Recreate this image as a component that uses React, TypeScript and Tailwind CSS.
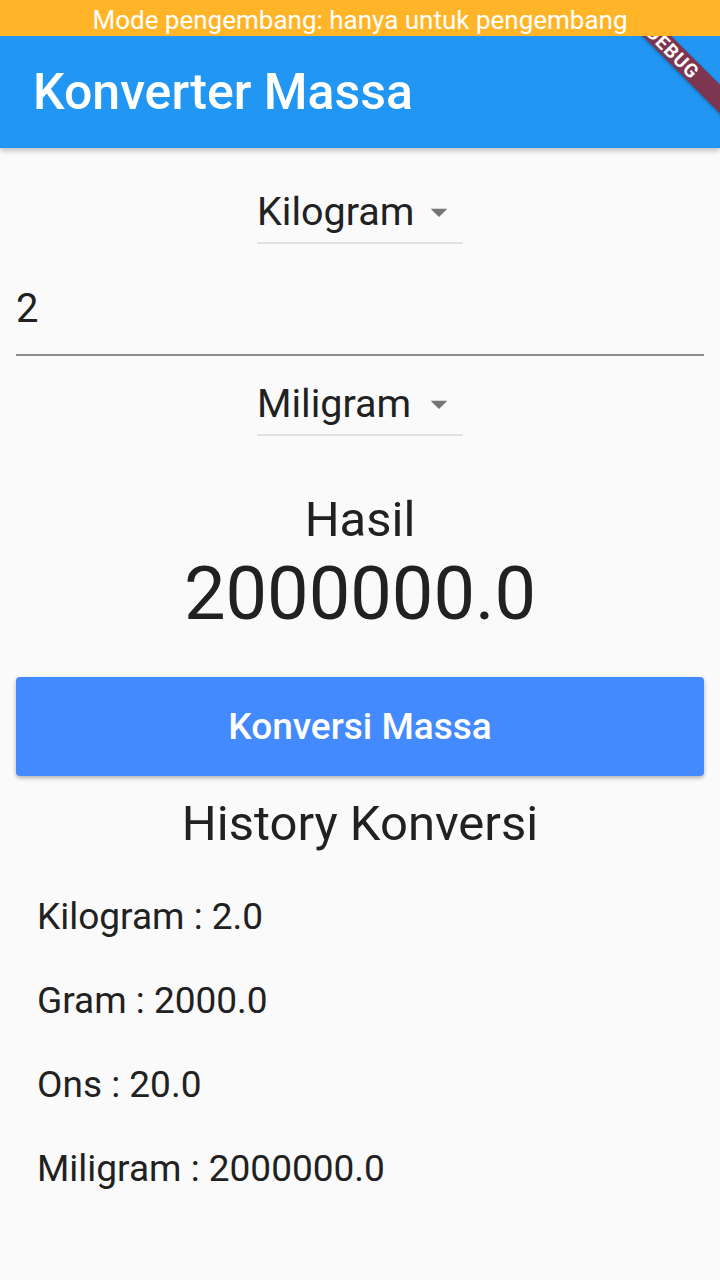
import React from 'react';

const ArrowDrop: React.FC = () => (
  <svg viewBox="0 0 24 24" className="w-[40px] h-[40px] fill-[#757575]">
    <path d="M7 10l5 5 5-5z" />
  </svg>
);

const Dropdown: React.FC<{ label: string; className?: string }> = ({ label, className }) => (
  <div className={`mx-auto w-[206px] flex items-center justify-between pb-[6px] border-b-2 border-[#e0e0e0] ${className ?? ''}`}>
    <span className="text-[39.5px] leading-[48px] text-[#212121]">{label}</span>
    <span className="mr-[4px]">
      <ArrowDrop />
    </span>
  </div>
);

const history = ['Kilogram : 2.0', 'Gram : 2000.0', 'Ons : 20.0', 'Miligram : 2000000.0'];

const App: React.FC = () => {
  return (
    <div className="relative w-full h-[1280px] overflow-hidden bg-[#fafafa] font-[Roboto,sans-serif]">
      {/* developer mode strip */}
      <div className="relative z-20 h-[36px] bg-[#ffb527] text-center text-white text-[26px] leading-[36px] pt-[2px]">
        Mode pengembang: hanya untuk pengembang
      </div>

      {/* debug ribbon */}
      <div className="absolute z-10 left-[573px] top-[42px] w-[200px] h-[20px] rotate-45 bg-[#7d3550] shadow-[0_1px_3px_rgba(0,0,0,0.35)] flex items-center justify-center">
        <span className="text-white text-[19px] font-bold leading-none tracking-[1px]">DEBUG</span>
      </div>

      <header className="relative z-[5] h-[112px] bg-[#2196f3] px-[33px] flex items-center shadow-[0_3px_5px_rgba(0,0,0,0.22)]">
        <h1 className="text-white text-[50px] font-medium leading-none">Konverter Massa</h1>
      </header>

      <main className="flex flex-col">
        <Dropdown label="Kilogram" className="mt-[40px]" />

        <div className="mx-[16px] mt-[41px] pb-[21px] border-b-2 border-[#8c8c8c] text-[40px] leading-[48px] text-[#212121]">
          2
        </div>

        <Dropdown label="Miligram" className="mt-[24px]" />

        <p className="mt-[56px] text-center text-[49px] leading-[56px] text-[#212121]">Hasil</p>
        <p className="mt-[4px] text-center text-[74px] leading-[84px] text-[#212121]">2000000.0</p>

        <button className="mx-[16px] mt-[41px] h-[99px] rounded-[4px] bg-[#448aff] text-white text-[37px] font-medium shadow-[0_2px_4px_rgba(0,0,0,0.3)]">
          Konversi Massa
        </button>

        <p className="mt-[20px] text-center text-[49px] leading-[56px] text-[#212121]">History Konversi</p>

        <ul className="mt-[23px] px-[37px]">
          {history.map((h) => (
            <li key={h} className="text-[37px] leading-[84px] text-[#212121]">
              {h}
            </li>
          ))}
        </ul>
      </main>
    </div>
  );
};

export default App;
